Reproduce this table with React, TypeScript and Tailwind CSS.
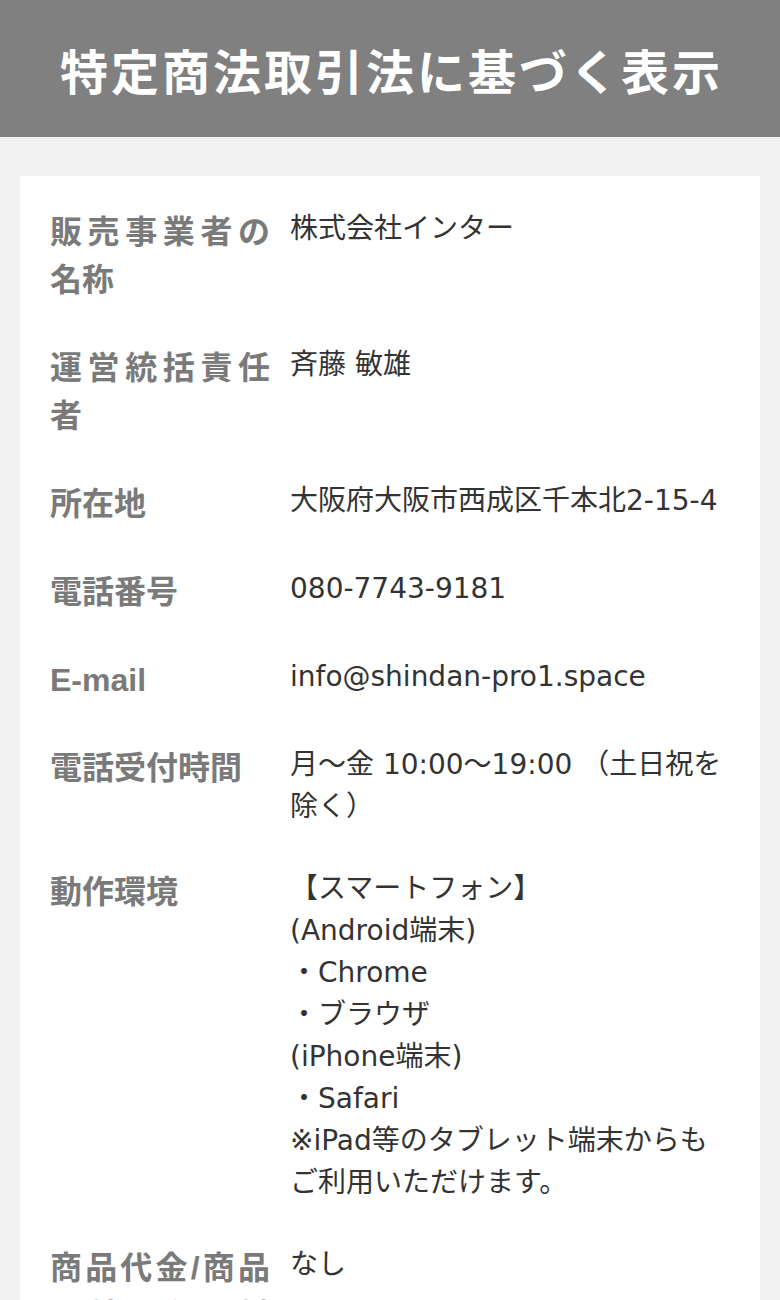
import React from "react";

type Row = { label: string; value: React.ReactNode };

const rows: Row[] = [
  { label: "販売事業者の名称", value: "株式会社インター" },
  { label: "運営統括責任者", value: "斉藤 敏雄" },
  { label: "所在地", value: "大阪府大阪市西成区千本北2-15-4" },
  { label: "電話番号", value: "080-7743-9181" },
  { label: "E-mail", value: "info@shindan-pro1.space" },
  { label: "電話受付時間", value: "月〜金 10:00〜19:00 （土日祝を除く）" },
  {
    label: "動作環境",
    value: (
      <>
        【スマートフォン】
        <br />
        (Android端末)
        <br />
        ・Chrome
        <br />
        ・ブラウザ
        <br />
        (iPhone端末)
        <br />
        ・Safari
        <br />
        ※iPad等のタブレット端末からもご利用いただけます。
      </>
    ),
  },
  { label: "商品代金/商品以外の必要料金", value: "なし" },
  { label: "支払方法", value: "クレジットカード決済" },
];

const App = () => {
  return (
    <div lang="ja" className="min-h-screen w-full bg-[#f2f2f2]">
      <header className="flex h-[137px] w-full items-center justify-center bg-[#808080]">
        <h1 className="pl-[3px] font-['Noto_Sans_CJK_JP',sans-serif] text-[48px] font-bold leading-none tracking-[3px] text-white">
          特定商法取引法に基づく表示
        </h1>
      </header>
      <div className="px-5 pt-[39px]">
        <div className="bg-white px-[30px] pt-3 pb-6">
          {rows.map((row) => (
            <div key={row.label} className="grid grid-cols-[220px_1fr] gap-x-5 py-5">
              <div className="text-justify font-['Liberation_Sans','Noto_Sans_CJK_JP',sans-serif] text-[32px] font-bold leading-[48px] text-[#7a7a7a]">
                {row.label}
              </div>
              <div className="font-['DejaVu_Sans','Noto_Sans_CJK_JP',sans-serif] text-[28px] leading-[42px] text-[#333333]">
                {row.value}
              </div>
            </div>
          ))}
        </div>
      </div>
    </div>
  );
};

export default App;
